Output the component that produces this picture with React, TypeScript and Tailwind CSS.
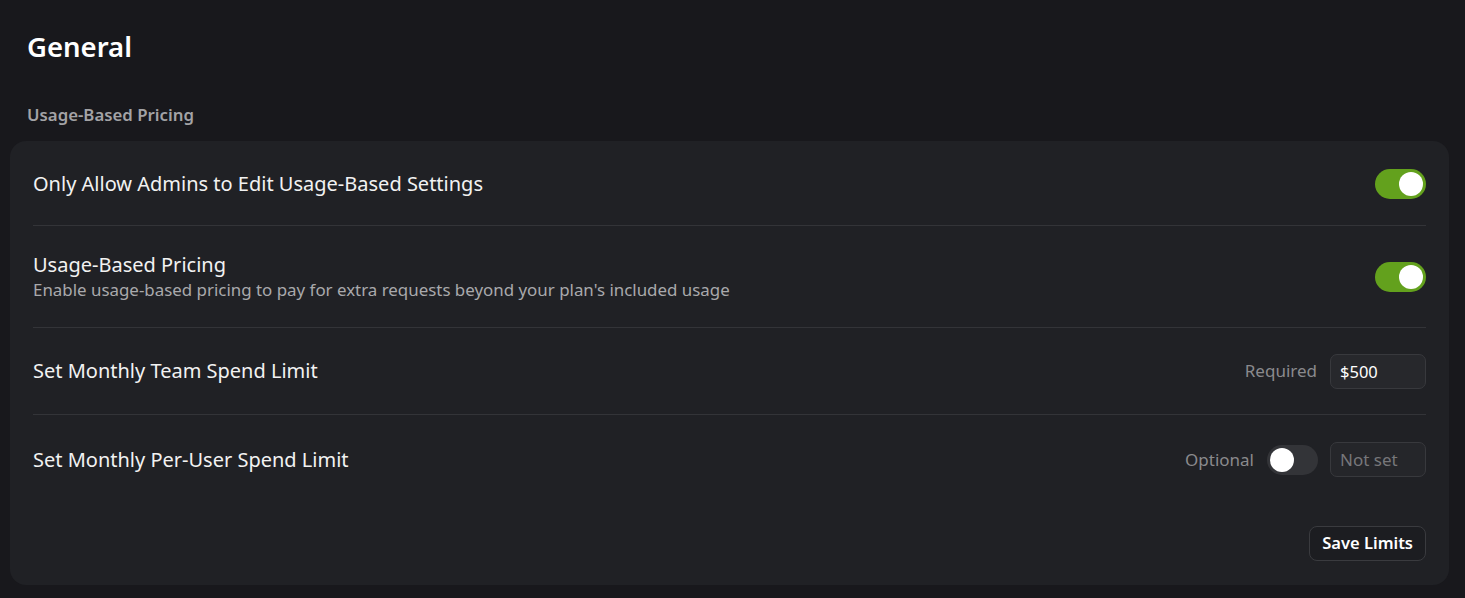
import { useState } from "react";

function Toggle({ on, onChange }: { on: boolean; onChange: () => void }) {
  return (
    <button
      onClick={onChange}
      className={`relative flex h-[30px] w-[51px] shrink-0 items-center rounded-full px-[3px] ${
        on ? "justify-end bg-[#63a11d]" : "justify-start bg-[#333438]"
      }`}
    >
      <span className="h-[24px] w-[24px] rounded-full bg-white" />
    </button>
  );
}

export default function App() {
  const [adminsOnly, setAdminsOnly] = useState(true);
  const [usagePricing, setUsagePricing] = useState(true);
  const [perUser, setPerUser] = useState(false);

  return (
    <div
      className="min-h-[598px] w-full bg-[#18181c] pl-[10px] pr-[16px] pt-[28px] text-white"
      style={{ fontFamily: '"Noto Sans", "Open Sans", sans-serif' }}
    >
      <h1 className="pl-[17px] text-[27.5px] font-semibold leading-[38px]">General</h1>
      <h2 className="mt-[38px] pl-[17px] text-[16.8px] font-semibold leading-[22px] text-[#a3a3a6]">
        Usage-Based Pricing
      </h2>

      <div className="mt-[15px] rounded-[16px] bg-[#202125] px-[23px] pb-[24px]">
        {/* Admins only */}
        <div className="flex h-[85px] items-center justify-between border-b border-[#333438] pt-[2px]">
          <span className="text-[20px] text-[#f2f2f2]">Only Allow Admins to Edit Usage-Based Settings</span>
          <Toggle on={adminsOnly} onChange={() => setAdminsOnly(!adminsOnly)} />
        </div>

        {/* Usage pricing */}
        <div className="flex h-[102px] items-center justify-between border-b border-[#333438]">
          <div className="flex flex-col">
            <span className="text-[20px] leading-[27px] text-[#f2f2f2]">Usage-Based Pricing</span>
            <span className="text-[16.9px] leading-[24px] text-[#a9a9ac]">
              Enable usage-based pricing to pay for extra requests beyond your plan's included usage
            </span>
          </div>
          <Toggle on={usagePricing} onChange={() => setUsagePricing(!usagePricing)} />
        </div>

        {/* Team limit */}
        <div className="flex h-[87px] items-center justify-between border-b border-[#333438]">
          <span className="text-[20px] text-[#f2f2f2]">Set Monthly Team Spend Limit</span>
          <div className="flex items-center gap-[13px]">
            <span className="text-[17px] text-[#8a8a8d]">Required</span>
            <input
              defaultValue="$500"
              className="h-[35px] w-[96px] rounded-[7px] border border-[#38393d] bg-[#27282c] px-[9px] text-[16.5px] text-white outline-none"
            />
          </div>
        </div>

        {/* Per-user limit */}
        <div className="flex h-[89px] items-center justify-between">
          <span className="text-[20px] text-[#f2f2f2]">Set Monthly Per-User Spend Limit</span>
          <div className="flex items-center gap-[12px]">
            <span className="mr-[1px] text-[17px] text-[#8a8a8d]">Optional</span>
            <Toggle on={perUser} onChange={() => setPerUser(!perUser)} />
            <input
              placeholder="Not set"
              disabled={!perUser}
              className="h-[35px] w-[96px] rounded-[7px] border border-[#38393d] bg-[#25262a] px-[9px] text-[17px] text-white outline-none placeholder:text-[#77777a]"
            />
          </div>
        </div>

        <div className="mt-[22px] flex justify-end">
          <button className="h-[35px] rounded-[8px] border border-[#3a3b3f] bg-[#1c1d21] px-[12px] text-[16.5px] font-semibold text-white">
            Save Limits
          </button>
        </div>
      </div>
    </div>
  );
}
